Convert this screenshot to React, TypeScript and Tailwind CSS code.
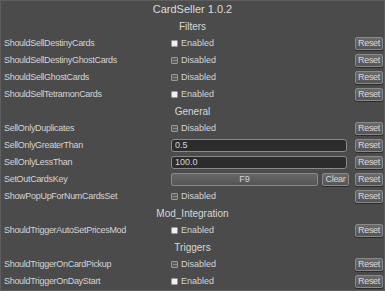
import React from "react"

type Row =
  | { kind: "head"; text: string }
  | { kind: "toggle"; label: string; on: boolean }
  | { kind: "input"; label: string; value: string }
  | { kind: "key"; label: string; value: string }

const rows: Row[] = [
  { kind: "head", text: "Filters" },
  { kind: "toggle", label: "ShouldSellDestinyCards", on: true },
  { kind: "toggle", label: "ShouldSellDestinyGhostCards", on: false },
  { kind: "toggle", label: "ShouldSellGhostCards", on: false },
  { kind: "toggle", label: "ShouldSellTetramonCards", on: true },
  { kind: "head", text: "General" },
  { kind: "toggle", label: "SellOnlyDuplicates", on: false },
  { kind: "input", label: "SellOnlyGreaterThan", value: "0.5" },
  { kind: "input", label: "SellOnlyLessThan", value: "100.0" },
  { kind: "key", label: "SetOutCardsKey", value: "F9" },
  { kind: "toggle", label: "ShowPopUpForNumCardsSet", on: false },
  { kind: "head", text: "Mod_Integration" },
  { kind: "toggle", label: "ShouldTriggerAutoSetPricesMod", on: true },
  { kind: "head", text: "Triggers" },
  { kind: "toggle", label: "ShouldTriggerOnCardPickup", on: false },
  { kind: "toggle", label: "ShouldTriggerOnDayStart", on: true },
]

const Btn = ({ children, w }: { children: React.ReactNode; w: string }) => (
  <div className={`${w} shrink-0 h-[13px] flex items-center justify-center rounded-[2px] border border-[#8a8a8a] bg-gradient-to-b from-[#6a6a6a] to-[#555] text-[#d8d8d8] shadow-[0_1px_0_#2a2a2a]`}>
    {children}
  </div>
)

const Check = ({ on }: { on: boolean }) => (
  <div className="w-[7px] h-[7px] rounded-[1px] border border-[#999] bg-[#5c5c5c] flex items-center justify-center mr-[3px]">
    {on ? <div className="w-[5px] h-[5px] bg-[#f0f0f0]" /> : <div className="w-[4px] h-[1px] bg-[#888]" />}
  </div>
)

export default function App() {
  return (
    <div className="w-[385px] h-[291px] bg-[#4b4b4b] border border-[#5e5e5e] overflow-hidden text-[9px] tracking-[-0.3px] text-[#d4d4d4] font-['Liberation_Sans',Arial,sans-serif] leading-none">
      <div className="h-[17px] flex items-center justify-center text-[11px] tracking-normal text-[#dcdcdc]">CardSeller 1.0.2</div>
      {rows.map((r, i) =>
        r.kind === "head" ? (
          <div key={i} className="h-[17px] flex items-center justify-center text-[10px] tracking-normal text-[#d8d8d8]">
            {r.text}
          </div>
        ) : (
          <div key={i} className="h-[17px] flex items-center pl-[3px] pr-[1px]">
            <div className="w-[167px] shrink-0">{r.label}</div>
            <div className="flex-1 flex items-center">
              {r.kind === "toggle" && (
                <div className="flex-1 flex items-center">
                  <Check on={r.on} />
                  <span className="tracking-normal">{r.on ? "Enabled" : "Disabled"}</span>
                </div>
              )}
              {r.kind === "input" && (
                <div className="flex-1 h-[13px] rounded-[3px] border border-[#8a8a8a] bg-[#2c2c2c] flex items-center px-[3px] mr-[8px] tracking-normal">
                  {r.value}
                </div>
              )}
              {r.kind === "key" && (
                <>
                  <div className="flex-1 h-[13px] rounded-[2px] border border-[#8a8a8a] bg-gradient-to-b from-[#666] to-[#555] flex items-center justify-center mr-[4px] tracking-normal">
                    {r.value}
                  </div>
                  <div className="mr-[6px]">
                    <Btn w="w-[27px]">Clear</Btn>
                  </div>
                </>
              )}
              <Btn w="w-[28px]">Reset</Btn>
            </div>
          </div>
        )
      )}
    </div>
  )
}
